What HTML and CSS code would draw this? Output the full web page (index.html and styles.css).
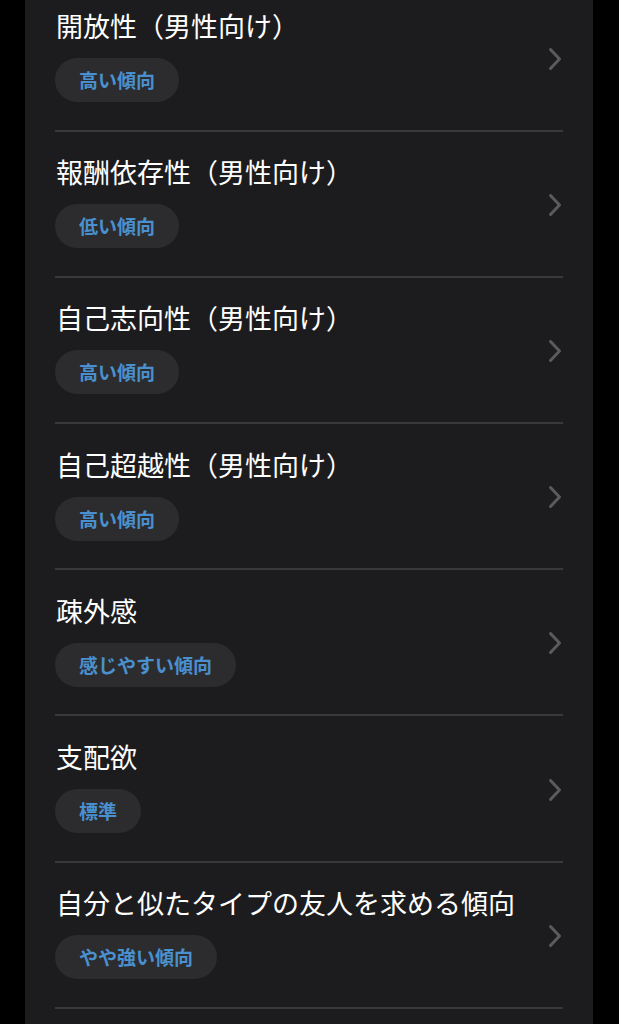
FILE: index.html
```html
<!DOCTYPE html>
<html lang="ja">
<head>
<meta charset="utf-8">
<link rel="stylesheet" href="styles.css">
</head>
<body>
<div class="card">
  <div class="list">
    <div class="row">
      <div class="info"><div class="title">開放性（男性向け）</div><span class="pill">高い傾向</span></div>
      <svg class="chev" viewBox="0 0 14 24"><polyline points="2.5,2.5 11.5,12 2.5,21.5"/></svg>
    </div>
    <div class="row">
      <div class="info"><div class="title">報酬依存性（男性向け）</div><span class="pill">低い傾向</span></div>
      <svg class="chev" viewBox="0 0 14 24"><polyline points="2.5,2.5 11.5,12 2.5,21.5"/></svg>
    </div>
    <div class="row">
      <div class="info"><div class="title">自己志向性（男性向け）</div><span class="pill">高い傾向</span></div>
      <svg class="chev" viewBox="0 0 14 24"><polyline points="2.5,2.5 11.5,12 2.5,21.5"/></svg>
    </div>
    <div class="row">
      <div class="info"><div class="title">自己超越性（男性向け）</div><span class="pill">高い傾向</span></div>
      <svg class="chev" viewBox="0 0 14 24"><polyline points="2.5,2.5 11.5,12 2.5,21.5"/></svg>
    </div>
    <div class="row">
      <div class="info"><div class="title">疎外感</div><span class="pill">感じやすい傾向</span></div>
      <svg class="chev" viewBox="0 0 14 24"><polyline points="2.5,2.5 11.5,12 2.5,21.5"/></svg>
    </div>
    <div class="row">
      <div class="info"><div class="title">支配欲</div><span class="pill">標準</span></div>
      <svg class="chev" viewBox="0 0 14 24"><polyline points="2.5,2.5 11.5,12 2.5,21.5"/></svg>
    </div>
    <div class="row">
      <div class="info"><div class="title">自分と似たタイプの友人を求める傾向</div><span class="pill">やや強い傾向</span></div>
      <svg class="chev" viewBox="0 0 14 24"><polyline points="2.5,2.5 11.5,12 2.5,21.5"/></svg>
    </div>
  </div>
</div>
</body>
</html>
```

FILE: styles.css
```css
html, body {
  margin: 0;
  padding: 0;
  background: #000;
  height: 100%;
  overflow: hidden;
}
body {
  font-family: "Noto Sans CJK JP", "Noto Sans", sans-serif;
}
.card {
  margin-left: 25px;
  width: 568px;
  height: 1024px;
  background: #1c1c1e;
  padding: 0 30px;
  box-sizing: border-box;
  overflow: hidden;
}
.list {
  margin-top: -14.5px;
}
.row {
  display: flex;
  justify-content: space-between;
  align-items: flex-start;
  height: 146.2px;
  box-sizing: border-box;
  border-bottom: 2px solid #39393b;
}
.info {
  padding-top: 22.5px;
  display: flex;
  flex-direction: column;
  align-items: flex-start;
}
.title {
  color: #ffffff;
  font-size: 27px;
  line-height: 36px;
  margin-left: 1px;
}
.pill {
  margin-top: 14px;
  height: 44px;
  line-height: 44px;
  padding: 0 24px;
  border-radius: 22px;
  background: #2c2c2e;
  color: #4a90cf;
  font-size: 19px;
  font-weight: 700;
}
.chev {
  align-self: center;
  width: 14px;
  height: 24px;
  margin-right: 1px;
  margin-top: 2px;
}
.chev polyline {
  fill: none;
  stroke: #5b5b5f;
  stroke-width: 3;
  stroke-linecap: round;
  stroke-linejoin: round;
}
```
